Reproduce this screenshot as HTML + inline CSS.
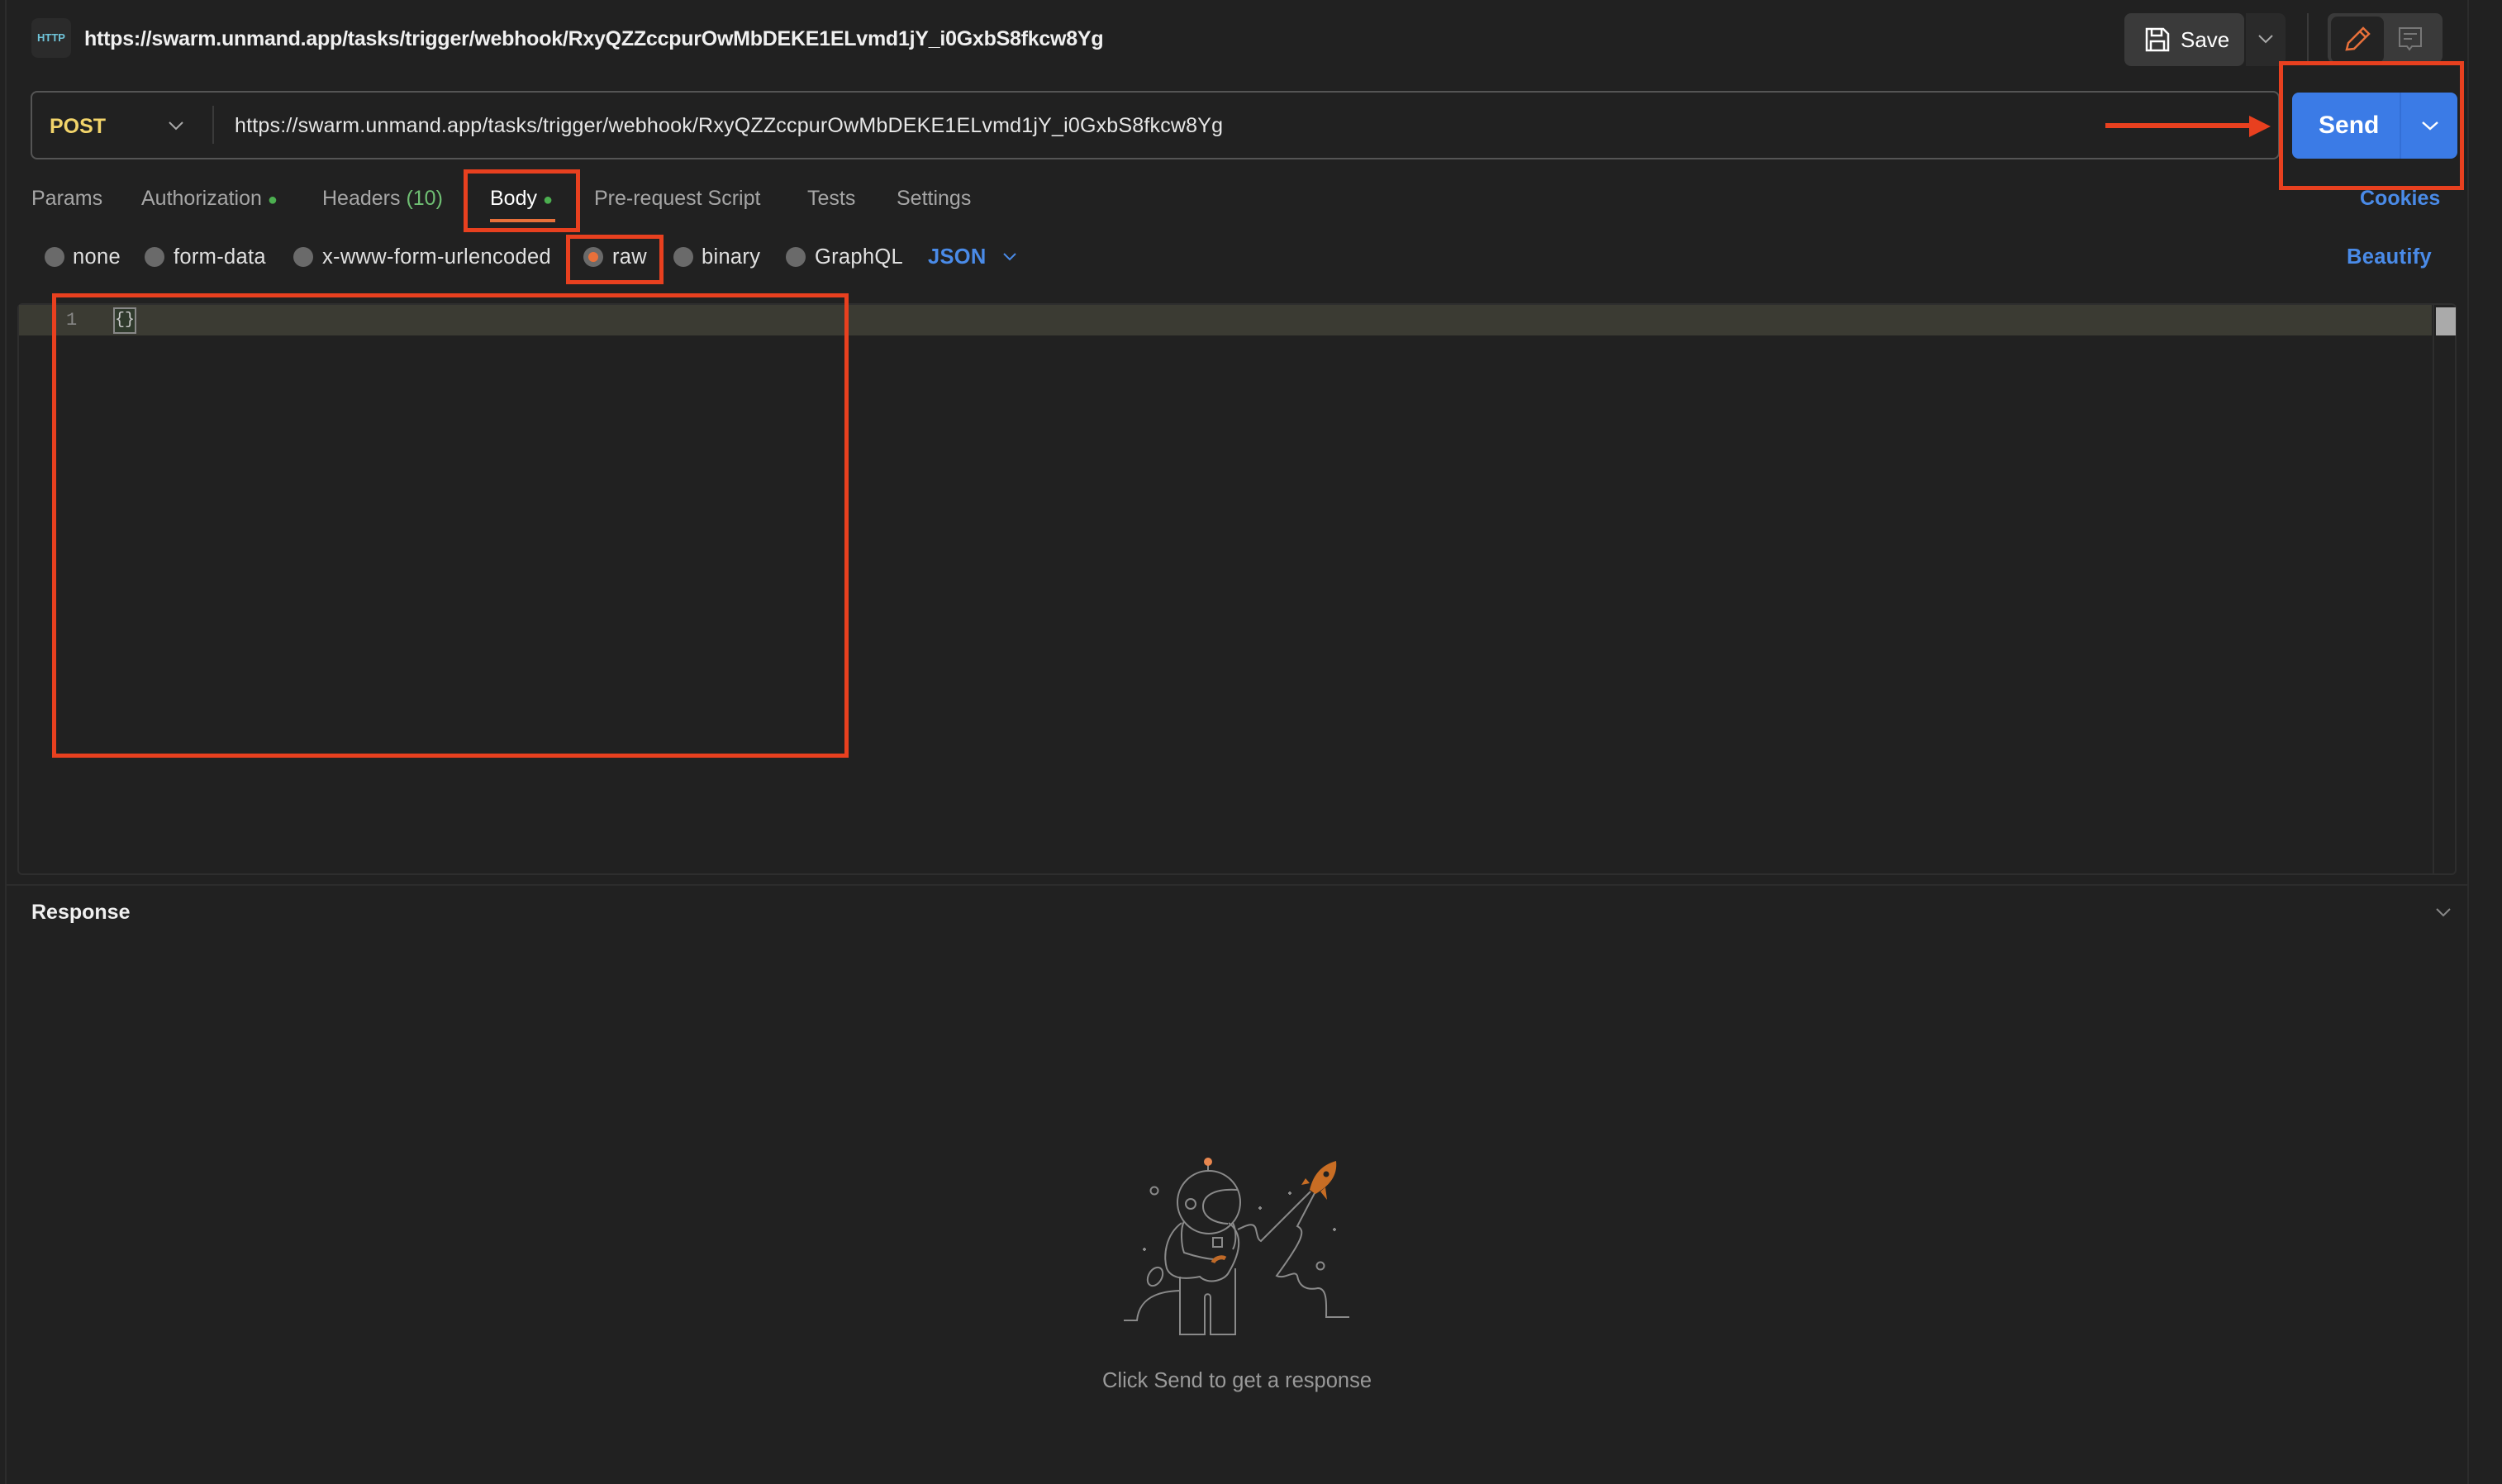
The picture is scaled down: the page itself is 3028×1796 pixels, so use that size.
<!DOCTYPE html>
<html><head><meta charset="utf-8"><style>
*{margin:0;padding:0;box-sizing:border-box}
body{width:3028px;height:1796px;background:#212121;font-family:"Liberation Sans",sans-serif;color:#e6e6e6;position:relative;overflow:hidden}
.a{position:absolute;white-space:nowrap}
.t{font-size:25px;color:#a6a6a6;top:226px}
.r{font-size:25.5px;color:#e0e0e0;top:297px;letter-spacing:0.3px}
.rd{position:absolute;width:24px;height:24px;border-radius:50%;background:#6a6a6a;top:299px}
.box{position:absolute;border:5px solid #e8401f}
</style></head><body>
<div class="a" style="left:6px;top:0;width:2px;height:1796px;background:#2c2c2c"></div>
<div class="a" style="left:2986px;top:0;width:2px;height:1796px;background:#2c2c2c"></div>
<!-- title -->
<div class="a" style="left:38px;top:22px;width:48px;height:48px;border-radius:8px;background:#2b2b2b;color:#6fc3d8;font-size:13px;font-weight:bold;text-align:center;line-height:48px">HTTP</div>
<div class="a" style="left:102px;top:33px;font-size:25px;font-weight:bold;color:#f0f0f0;letter-spacing:-0.25px">https://swarm.unmand.app/tasks/trigger/webhook/RxyQZZccpurOwMbDEKE1ELvmd1jY_i0GxbS8fkcw8Yg</div>
<!-- save -->
<div class="a" style="left:2571px;top:16px;width:145px;height:64px;border-radius:8px;background:#3a3a3a"></div>
<svg class="a" style="left:2596px;top:33px" width="30" height="30" viewBox="0 0 30 30"><path d="M2 2h20l6 6v20H2z M8 2v8h12V2 M7 28V17h16v11" fill="none" stroke="#fff" stroke-width="2.5"/></svg>
<div class="a" style="left:2639px;top:33px;font-size:26px;color:#fff">Save</div>
<div class="a" style="left:2718px;top:16px;width:48px;height:64px;border-radius:0 8px 8px 0;background:#2a2a2a"></div>
<svg class="a" style="left:2732px;top:40px" width="20" height="14"><path d="M2 3l8 8 8-8" fill="none" stroke="#aaa" stroke-width="2"/></svg>
<div class="a" style="left:2792px;top:16px;width:2px;height:60px;background:#3a3a3a"></div>
<div class="a" style="left:2817px;top:16px;width:139px;height:60px;border-radius:8px;background:#3a3a3a"></div>
<div class="a" style="left:2821px;top:20px;width:64px;height:56px;border-radius:8px;background:#232323"></div>
<svg class="a" style="left:2836px;top:32px" width="34" height="32"><path d="M4 28l2-8L24 2l7 7-18 18z M20 6l7 7" fill="none" stroke="#e8703a" stroke-width="2.5"/></svg>
<svg class="a" style="left:2902px;top:32px" width="30" height="30"><path d="M2 2h26v22H17l-3 4-3-4H2z M7 9h16 M7 15h10" fill="none" stroke="#777" stroke-width="2"/></svg>
<!-- url bar -->
<div class="a" style="left:37px;top:110px;width:2722px;height:83px;border:2px solid #555;border-radius:8px"></div>
<div class="a" style="left:60px;top:139px;font-size:25px;font-weight:bold;color:#f2d46a">POST</div>
<svg class="a" style="left:203px;top:145px" width="20" height="14"><path d="M2 3l8 8 8-8" fill="none" stroke="#aaa" stroke-width="2"/></svg>
<div class="a" style="left:257px;top:128px;width:2px;height:46px;background:#3a3a3a"></div>
<div class="a" style="left:284px;top:138px;font-size:25px;color:#e6e6e6;letter-spacing:0.2px">https://swarm.unmand.app/tasks/trigger/webhook/RxyQZZccpurOwMbDEKE1ELvmd1jY_i0GxbS8fkcw8Yg</div>
<div class="a" style="left:2548px;top:149px;width:180px;height:6px;background:#e8401f"></div>
<svg class="a" style="left:2722px;top:138px" width="30" height="30"><path d="M0 2L26 15 0 28z" fill="#e8401f"/></svg>
<div class="a" style="left:2774px;top:112px;width:200px;height:80px;border-radius:8px;background:#3b7be6"></div>
<div class="a" style="left:2904px;top:112px;width:2px;height:80px;background:#336fd6"></div>
<div class="a" style="left:2806px;top:135px;font-size:30px;font-weight:bold;color:#fff">Send</div>
<svg class="a" style="left:2930px;top:145px" width="22" height="14"><path d="M2 3l9 8 9-8" fill="none" stroke="#fff" stroke-width="2.5"/></svg>
<div class="box" style="left:2758px;top:74px;width:224px;height:156px"></div>
<!-- tabs -->
<div class="a t" style="left:38px">Params</div>
<div class="a t" style="left:171px">Authorization <span style="color:#4caf50;font-size:20px">●</span></div>
<div class="a t" style="left:390px">Headers <span style="color:#6fbf73">(10)</span></div>
<div class="a t" style="left:593px;color:#fff">Body <span style="color:#4caf50;font-size:20px">●</span></div>
<div class="a" style="left:593px;top:265px;width:79px;height:4px;background:#e8703a"></div>
<div class="a t" style="left:719px">Pre-request Script</div>
<div class="a t" style="left:977px">Tests</div>
<div class="a t" style="left:1085px">Settings</div>
<div class="a t" style="left:2856px;color:#4a8be8;font-weight:bold">Cookies</div>
<div class="box" style="left:561px;top:205px;width:141px;height:76px"></div>
<!-- body types -->
<div class="rd" style="left:54px"></div><div class="a r" style="left:88px">none</div>
<div class="rd" style="left:175px"></div><div class="a r" style="left:210px">form-data</div>
<div class="rd" style="left:355px"></div><div class="a r" style="left:390px">x-www-form-urlencoded</div>
<div class="rd" style="left:706px;background:#6a6a6a"><div style="margin:6px;width:12px;height:12px;border-radius:50%;background:#e8703a"></div></div><div class="a r" style="left:741px">raw</div>
<div class="rd" style="left:815px"></div><div class="a r" style="left:849px">binary</div>
<div class="rd" style="left:951px"></div><div class="a r" style="left:986px">GraphQL</div>
<div class="a r" style="left:1123px;color:#4a8be8;font-weight:bold">JSON</div>
<svg class="a" style="left:1213px;top:305px" width="18" height="12"><path d="M2 2l7 7 7-7" fill="none" stroke="#4a8be8" stroke-width="2"/></svg>
<div class="a r" style="left:2840px;color:#4a8be8;font-weight:bold">Beautify</div>
<div class="box" style="left:685px;top:284px;width:118px;height:60px"></div>
<!-- editor -->
<div class="a" style="left:21px;top:367px;width:2952px;height:692px;border:2px solid #2e2e2e;border-radius:6px"></div>
<div class="a" style="left:23px;top:369px;width:2920px;height:37px;background:#3b3b33"></div>
<div class="a" style="left:2944px;top:369px;width:2px;height:688px;background:#2e2e2e"></div>
<div class="a" style="left:2948px;top:372px;width:24px;height:34px;background:#aaa"></div>
<div class="a" style="left:80px;top:375px;font-size:22px;color:#888;font-family:'Liberation Mono',monospace">1</div>
<div class="a" style="left:137px;top:372px;width:28px;height:32px;border:2px solid #888;background:#2f3a2c;font-size:20px;color:#ccc;font-family:'Liberation Mono',monospace;line-height:28px;text-align:center">{}</div>
<div class="box" style="left:63px;top:355px;width:964px;height:562px"></div>
<div class="a" style="left:8px;top:1070px;width:2978px;height:2px;background:#2c2c2c"></div>
<div class="a" style="left:38px;top:1090px;font-size:25px;font-weight:bold;color:#f0f0f0">Response</div>
<svg class="a" style="left:2947px;top:1097px" width="20" height="14"><path d="M2 3l8 8 8-8" fill="none" stroke="#888" stroke-width="2"/></svg>
<!-- illustration -->
<svg class="a" style="left:1340px;top:1380px" width="320" height="260" viewBox="0 0 320 260" fill="none" stroke="#8a8a8a" stroke-width="2">
<circle cx="123" cy="75" r="38"/>
<path d="M158 60c-30-2-42 8-42 20 0 12 12 20 30 21"/>
<circle cx="101" cy="77" r="6"/><circle cx="57" cy="61" r="4.5"/><circle cx="258" cy="152" r="4.5"/>
<path d="M122 30v8"/>
<path d="M90 100c-20 15-22 40-18 55 5 12 20 14 40 10 10 10 30 5 35-5 12-20 20-45 0-60"/>
<path d="M93 98c-5 10-3 30 0 38 15 5 30 8 38 8"/>
<path d="M152 100c5 10 4 25 0 32"/>
<rect x="128" y="118" width="11" height="11"/>
<path d="M88 165v70h30v-45c0-5 7-5 7 0v45h30v-80"/>
<path d="M20 218h16c2-20 15-35 52-36"/>
<path d="M158 108c10-5 20-10 22 0 2 8 2 12 6 14l60-60"/>
<path d="M252 62l-22 42c10 5 8 15-25 60 10 5 22-8 25 0 2 12 10 18 25 15 12 0 10 22 10 35h28"/>
<ellipse cx="58" cy="165" rx="8" ry="12" transform="rotate(30 58 165)"/>
<path d="M45 130v4M43 132h4M185 80v4M183 82h4M221 62v4M219 64h4M275 106v4M273 108h4"/>
<path d="M128 148c2-5 10-8 15-5" stroke="#c06a28" stroke-width="5"/>
<circle cx="122" cy="26" r="5" fill="#e9874f" stroke="none"/>
<path d="M245 60c5-20 15-30 32-35 2 18-8 30-25 40z M245 52l-10 2 5-8z M258 62l8 10-2-15z" fill="#c86d24" stroke="none"/>
<circle cx="265" cy="41" r="3.5" fill="#212121" stroke="none"/>
</svg>
<div class="a" style="left:0;width:2994px;top:1657px;text-align:center;font-size:25.5px;color:#9a9a9a">Click Send to get a response</div>
</body></html>
